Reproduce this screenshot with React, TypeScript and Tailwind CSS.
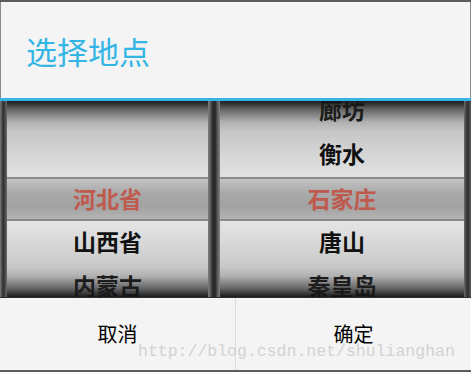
import React from "react"

type Wheel = {
  items: string[]
  selected: number
}

const wheels: Wheel[] = [
  { items: ["", "", "河北省", "山西省", "内蒙古"], selected: 2 },
  { items: ["廊坊", "衡水", "石家庄", "唐山", "秦皇岛"], selected: 2 },
]

const cjk = { fontFamily: '"Noto Sans CJK SC", "Noto Sans", sans-serif' }

const WheelColumn = ({ wheel, className }: { wheel: Wheel; className: string }) => {
  return (
    <div
      className={`relative h-full overflow-hidden bg-[linear-gradient(to_bottom,#b4b4b4,#d8d8d8_30%,#ececec_48%,#ececec_55%,#cfcfcf_80%,#b2b2b2)] ${className}`}
    >
      <div className="-mt-[12px] flex flex-col">
        {wheel.items.map((item, i) => (
          <div
            key={i}
            className={
              i === wheel.selected
                ? "flex h-[44px] items-center justify-center border-y-2 border-[#8a8a8a] bg-[linear-gradient(to_bottom,#c4c4c4,#a9a9a9_35%,#a2a2a2_70%,#b4b4b4)] pb-[2px] text-[23px] font-bold text-[#bf5a4e]"
                : "flex h-[44px] items-center justify-center pb-[3px] text-[23px] font-bold text-[#111]"
            }
            style={cjk}
          >
            {item}
          </div>
        ))}
      </div>
      {/* top and bottom shadows over the wheel */}
      <div className="pointer-events-none absolute inset-x-0 top-0 h-[30px] bg-[linear-gradient(to_bottom,rgba(20,20,20,0.95),rgba(40,40,40,0.55)_30%,rgba(80,80,80,0.15)_70%,rgba(0,0,0,0))]" />
      <div className="pointer-events-none absolute inset-x-0 bottom-0 h-[30px] bg-[linear-gradient(to_top,rgba(20,20,20,0.95),rgba(40,40,40,0.55)_30%,rgba(80,80,80,0.15)_70%,rgba(0,0,0,0))]" />
    </div>
  )
}

export default function App() {
  return (
    <div className="relative flex h-[372px] w-[471px] flex-col overflow-hidden border-t-2 border-[#5c5c5c] bg-[#f4f4f4]">
      <div className="flex h-[96px] items-center border-x border-[#8a8a8a] pl-[25px]">
        <span className="text-[31px] leading-none text-[#33b5e5]" style={cjk}>
          选择地点
        </span>
      </div>
      <div className="h-[3px] bg-[#33b5e5]" />
      <div className="flex h-[196px] bg-[#3a3a3a]">
        <div className="w-[7px] bg-[linear-gradient(to_right,#7a7a7a,#2e2e2e_45%,#4a4a4a_75%,#6e6e6e)]" />
        <WheelColumn wheel={wheels[0]} className="w-[201px]" />
        <div className="w-[12px] bg-[linear-gradient(to_right,#808080,#555_25%,#2c2c2c_35%,#2c2c2c_65%,#555_75%,#808080)]" />
        <WheelColumn wheel={wheels[1]} className="flex-1" />
        <div className="w-[7px] bg-[linear-gradient(to_right,#6e6e6e,#4a4a4a_25%,#2e2e2e_55%,#5a5a5a)]" />
      </div>
      <div className="flex flex-1 border-t border-[#2e2e2e] border-b-2 border-b-[#5c5c5c]">
        <button className="flex flex-1 items-center justify-center border-r border-[#dcdcdc] text-[20px] text-black" style={cjk}>
          取消
        </button>
        <button className="flex flex-1 items-center justify-center text-[20px] text-black" style={cjk}>
          确定
        </button>
      </div>
      <span
        className="pointer-events-none absolute left-[138px] top-[342px] text-[16.5px] leading-none text-[#d2d2d2]"
        style={{ fontFamily: '"Liberation Mono", monospace' }}
      >
        http://blog.csdn.net/shulianghan
      </span>
    </div>
  )
}
